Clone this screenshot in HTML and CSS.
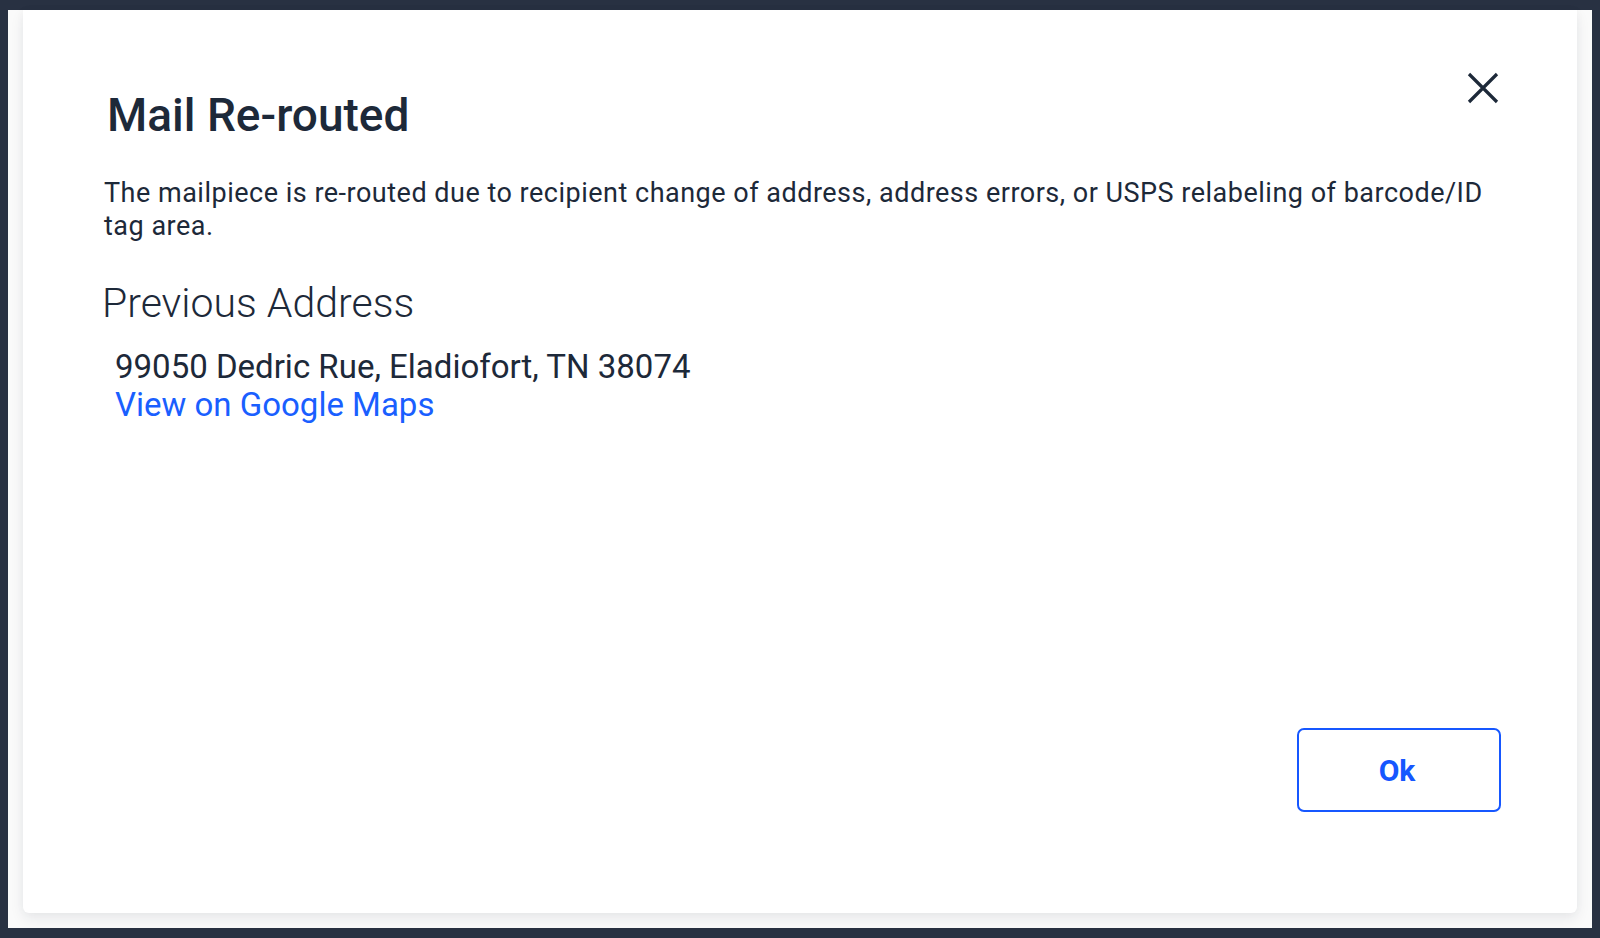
FILE: index.html
```html
<!DOCTYPE html>
<html lang="en">
<head>
<meta charset="utf-8">
<title>Mail Re-routed</title>
<link rel="stylesheet" href="styles.css">
</head>
<body>
<div class="frame">
  <div class="card">
    <div class="header">
      <h1 class="title">Mail Re-routed</h1>
      <button class="close" aria-label="Close">
        <svg width="36" height="36" viewBox="0 0 36 36"><path d="M4 4 L32 32 M32 4 L4 32" stroke="#1d2939" stroke-width="3.2" stroke-linecap="butt" fill="none"/></svg>
      </button>
    </div>
    <div class="content">
      <p class="desc">The mailpiece is re-routed due to recipient change of address, address errors, or USPS relabeling of barcode/ID tag area.</p>
      <h2 class="section">Previous Address</h2>
      <div class="address">
        <div class="addr-line">99050 Dedric Rue, Eladiofort, TN 38074</div>
        <a class="map-link" href="#">View on Google Maps</a>
      </div>
    </div>
    <div class="footer">
      <button class="ok">Ok</button>
    </div>
  </div>
</div>
</body>
</html>
```

FILE: styles.css
```css
* { box-sizing: border-box; }
html, body { margin: 0; padding: 0; }
body {
  background: #283142;
  font-family: Roboto, "Liberation Sans", sans-serif;
  color: #1d2939;
  height: 938px;
  padding: 10px 8px;
}
.frame {
  height: 918px;
  background: #fafafa;
  padding: 0 15px 15px 15px;
  display: flex;
  flex-direction: column;
}
.card {
  flex: 1;
  background: #ffffff;
  border-radius: 0 0 6px 6px;
  box-shadow: 0 6px 14px rgba(30, 40, 60, 0.08), 0 0 10px rgba(0, 0, 0, 0.03);
  padding: 60px 76px 101px 81px;
  display: flex;
  flex-direction: column;
}
.header {
  display: flex;
  justify-content: space-between;
  align-items: flex-start;
}
.title {
  margin: 18px 0 0 3px;
  font-size: 46px;
  line-height: 54px;
  font-weight: 500;
  color: #1d2939;
}
.close {
  border: 0;
  background: none;
  padding: 0;
  width: 36px;
  height: 36px;
  cursor: pointer;
}
.close svg { display: block; }
.content { flex: 1; }
.desc {
  margin: 35px 0 0 0;
  font-size: 27px;
  line-height: 33px;
  letter-spacing: 0.5px;
  font-weight: 400;
  color: #1d2939;
}
.section {
  margin: 37px 0 0 -2px;
  font-size: 41px;
  line-height: 47px;
  font-weight: 300;
  color: #1d2939;
}
.address {
  margin-top: 21px;
  padding-left: 11px;
  font-size: 33px;
  line-height: 38px;
}
.addr-line { color: #1d2939; }
.map-link {
  color: #1a5fff;
  text-decoration: none;
}
.footer {
  display: flex;
  justify-content: flex-end;
}
.ok {
  width: 204px;
  height: 84px;
  border: 2px solid #1657ff;
  border-radius: 7px;
  background: #ffffff;
  color: #1657ff;
  font-family: Roboto, "Liberation Sans", sans-serif;
  font-size: 30px;
  font-weight: 700;
  padding: 0 4px 0 0;
  cursor: pointer;
}
```
